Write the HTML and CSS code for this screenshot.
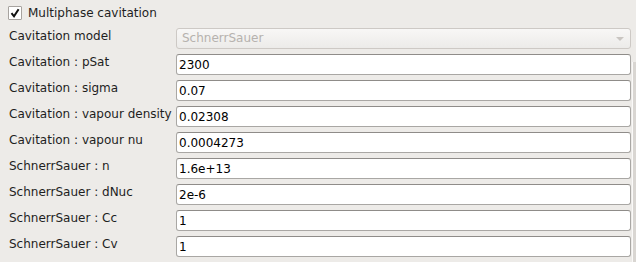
FILE: index.html
```html
<!DOCTYPE html>
<html>
<head>
<meta charset="utf-8">
<link rel="stylesheet" href="styles.css">
</head>
<body>
<div class="panel">
  <div class="check-row">
    <span class="checkbox"><svg width="10" height="10" viewBox="0 0 10 10"><path d="M1.5 5.2 L4 8.3 L8.6 1.2" fill="none" stroke="#111" stroke-width="2"/></svg></span>
    <span class="check-label">Multiphase cavitation</span>
  </div>
  <div class="form">
    <div class="label">Cavitation model</div>
    <div class="combo"><span>SchnerrSauer</span><span class="arrow"></span></div>
    <div class="label">Cavitation : pSat</div>
    <div class="field">2300</div>
    <div class="label">Cavitation : sigma</div>
    <div class="field">0.07</div>
    <div class="label">Cavitation : vapour density</div>
    <div class="field">0.02308</div>
    <div class="label">Cavitation : vapour nu</div>
    <div class="field">0.0004273</div>
    <div class="label">SchnerrSauer : n</div>
    <div class="field">1.6e+13</div>
    <div class="label">SchnerrSauer : dNuc</div>
    <div class="field">2e-6</div>
    <div class="label">SchnerrSauer : Cc</div>
    <div class="field">1</div>
    <div class="label">SchnerrSauer : Cv</div>
    <div class="field">1</div>
  </div>
  <div class="scroll-edge"></div>
</div>
</body>
</html>
```
FILE: styles.css
```css
html, body {
  margin: 0;
  padding: 0;
  background: #edebe8;
}
body {
  width: 636px;
  height: 262px;
  overflow: hidden;
  font-family: "DejaVu Sans", sans-serif;
  font-size: 12px;
  color: #1e1e1e;
}
.panel {
  position: relative;
  width: 636px;
  height: 262px;
}
.check-row {
  display: flex;
  align-items: center;
  height: 14px;
  padding: 6px 0 0 8px;
}
.checkbox {
  box-sizing: border-box;
  width: 14px;
  height: 14px;
  border: 1px solid #a7a39f;
  background: #ffffff;
  border-radius: 1px;
  display: flex;
  align-items: center;
  justify-content: center;
}
.check-label {
  margin-left: 6px;
  line-height: 14px;
}
.form {
  display: grid;
  grid-template-columns: 167px 455px;
  grid-auto-rows: 21px;
  row-gap: 5px;
  margin: 8px 0 0 9px;
}
.label {
  line-height: 14px;
  padding-top: 1px;
  white-space: nowrap;
}
.field {
  box-sizing: border-box;
  height: 21px;
  border: 1px solid #a9a7a4;
  border-top-color: #8f8c89;
  border-radius: 3px;
  background: #ffffff;
  color: #000;
  padding: 0 0 0 2px;
  line-height: 20px;
}
.combo {
  box-sizing: border-box;
  height: 21px;
  border: 1px solid #cdc9c5;
  border-radius: 3px;
  background: linear-gradient(#f8f7f6, #ecebe9);
  color: #b6b2ae;
  padding: 0 0 0 5px;
  line-height: 19px;
  display: flex;
  justify-content: space-between;
  align-items: center;
}
.arrow {
  width: 0;
  height: 0;
  border-left: 4px solid transparent;
  border-right: 4px solid transparent;
  border-top: 4px solid #c9c5c1;
  margin-right: 6px;
}
.scroll-edge {
  position: absolute;
  right: 0;
  top: 62px;
  bottom: 0;
  width: 3px;
  background: #d9d6d2;
  border-left: 1px solid #faf9f8;
}
```
